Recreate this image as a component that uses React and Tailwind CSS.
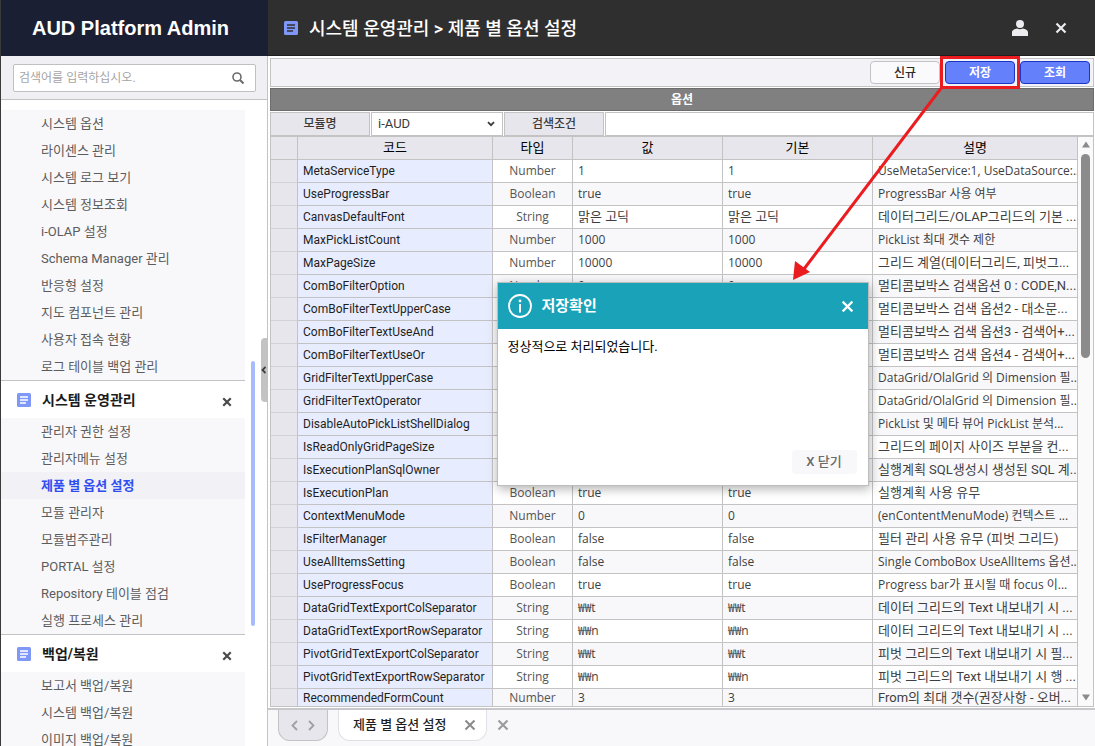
import { useState } from 'react';
import clsx from 'clsx';

const menuGroups = [
  {
    title: null,
    items: [
      '시스템 옵션',
      '라이센스 관리',
      '시스템 로그 보기',
      '시스템 정보조회',
      'i-OLAP 설정',
      'Schema Manager 관리',
      '반응형 설정',
      '지도 컴포넌트 관리',
      '사용자 접속 현황',
      '로그 테이블 백업 관리',
    ],
  },
  {
    title: '시스템 운영관리',
    items: [
      '관리자 권한 설정',
      '관리자메뉴 설정',
      '제품 별 옵션 설정',
      '모듈 관리자',
      '모듈범주관리',
      'PORTAL 설정',
      'Repository 테이블 점검',
      '실행 프로세스 관리',
    ],
  },
  {
    title: '백업/복원',
    items: ['보고서 백업/복원', '시스템 백업/복원', '이미지 백업/복원'],
  },
];

const options = [
  ['MetaServiceType', 'Number', '1', '1', 'UseMetaService:1, UseDataSource:...'],
  ['UseProgressBar', 'Boolean', 'true', 'true', 'ProgressBar 사용 여부'],
  ['CanvasDefaultFont', 'String', '맑은 고딕', '맑은 고딕', '데이터그리드/OLAP그리드의 기본 ...'],
  ['MaxPickListCount', 'Number', '1000', '1000', 'PickList 최대 갯수 제한'],
  ['MaxPageSize', 'Number', '10000', '10000', '그리드 계열(데이터그리드, 피벗그...'],
  ['ComBoFilterOption', 'Number', '0', '0', '멀티콤보박스 검색옵션 0 : CODE,N...'],
  ['ComBoFilterTextUpperCase', 'Boolean', 'false', 'false', '멀티콤보박스 검색 옵션2 - 대소문...'],
  ['ComBoFilterTextUseAnd', 'Boolean', 'false', 'false', '멀티콤보박스 검색 옵션3 - 검색어+...'],
  ['ComBoFilterTextUseOr', 'Boolean', 'false', 'false', '멀티콤보박스 검색 옵션4 - 검색어+...'],
  ['GridFilterTextUpperCase', 'Boolean', 'false', 'false', 'DataGrid/OlalGrid 의 Dimension 필...'],
  ['GridFilterTextOperator', 'Number', '0', '0', 'DataGrid/OlalGrid 의 Dimension 필...'],
  ['DisableAutoPickListShellDialog', 'Boolean', 'false', 'false', 'PickList 및 메타 뷰어 PickList 분석...'],
  ['IsReadOnlyGridPageSize', 'Boolean', 'false', 'false', '그리드의 페이지 사이즈 부분을 컨...'],
  ['IsExecutionPlanSqlOwner', 'Boolean', 'false', 'false', '실행계획 SQL생성시 생성된 SQL 계...'],
  ['IsExecutionPlan', 'Boolean', 'true', 'true', '실행계획 사용 유무'],
  ['ContextMenuMode', 'Number', '0', '0', '(enContentMenuMode) 컨텍스트 ...'],
  ['IsFilterManager', 'Boolean', 'false', 'false', '필터 관리 사용 유무 (피벗 그리드)'],
  ['UseAllItemsSetting', 'Boolean', 'false', 'false', 'Single ComboBox UseAllItems 옵션...'],
  ['UseProgressFocus', 'Boolean', 'true', 'true', 'Progress bar가 표시될 때 focus 이...'],
  ['DataGridTextExportColSeparator', 'String', '₩₩t', '₩₩t', '데이터 그리드의 Text 내보내기 시 ...'],
  ['DataGridTextExportRowSeparator', 'String', '₩₩n', '₩₩n', '데이터 그리드의 Text 내보내기 시 ...'],
  ['PivotGridTextExportColSeparator', 'String', '₩₩t', '₩₩t', '피벗 그리드의 Text 내보내기 시 필...'],
  ['PivotGridTextExportRowSeparator', 'String', '₩₩n', '₩₩n', '피벗 그리드의 Text 내보내기 시 행 ...'],
  ['RecommendedFormCount', 'Number', '3', '3', 'From의 최대 갯수(권장사항 - 오버...'],
];

function cellFont(text) {
  const hangul = (text.match(/[가-힣]/g) || []).length;
  const latin = (text.match(/\w/g) || []).length;
  return hangul > latin
    ? "font-['Roboto','Noto_Sans_CJK_KR',sans-serif] text-[13px]"
    : "font-['Open_Sans','Noto_Sans_CJK_KR',sans-serif] text-xs";
}

function DocIcon({ line }) {
  return (
    <svg className="w-[14px] h-[14px] shrink-0" viewBox="0 0 14 14">
      <rect width="14" height="14" rx="1.5" fill="#7f98f8" />
      <path d="M3 4h8M3 7h8M3 10h6" stroke={line} strokeWidth="1.6" />
    </svg>
  );
}

function CloseIcon({ className, width = 2 }) {
  return (
    <svg className={className} viewBox="0 0 12 12" fill="none" stroke="currentColor" strokeWidth={width}>
      <path d="M1.5 1.5l9 9M10.5 1.5l-9 9" />
    </svg>
  );
}

function Sidebar({ active, onSelect }) {
  return (
    <aside className="relative w-[268px] shrink-0 flex flex-col bg-white border-l border-[#3a3a3a] border-r border-r-[#c3c3c3]">
      <div className="h-14 shrink-0 -mr-px flex items-center justify-center bg-[#1b1f33] text-white">
        <h1 className="font-['Liberation_Sans'] font-bold text-xl pr-2">AUD Platform Admin</h1>
      </div>
      <div className="h-11 shrink-0 pl-3 pr-[11px] flex items-center bg-[#efeff4] border-b border-[#c3c3c3]">
        <label className="flex-1 h-7 flex items-center pl-[5px] pr-[11px] bg-white border border-[#c0c0c0] rounded-xs">
          <input
            type="text"
            aria-label="메뉴 검색"
            placeholder="검색어를 입력하십시오."
            className="flex-1 min-w-0 outline-none text-xs placeholder:text-[#a5a5a5]"
          />
          <svg className="w-3 h-3" viewBox="0 0 12 12" fill="none" stroke="#6b6b6b">
            <circle cx="5" cy="5" r="4" strokeWidth="1.6" />
            <path d="M8 8l3.5 3.5" strokeWidth="2" />
          </svg>
        </label>
      </div>

      <nav className="flex-1 min-h-0 overflow-hidden pt-[10px] pr-[22px]">
        {menuGroups.map((group, i) => (
          <section key={i} className={clsx(group.title && 'border-t border-[#c3c3c3]')}>
            {group.title && (
              <div className="h-[37px] flex items-center pl-4 pr-[13px]">
                <DocIcon line="#fff" />
                <h2 className="flex-1 pl-[11px] text-sm font-bold text-[#1b1b1b]">{group.title}</h2>
                <button type="button" aria-label="접기" className="pt-1 text-[#4a4a4a]">
                  <CloseIcon className="w-[10px] h-[10px]" width={2.6} />
                </button>
              </div>
            )}
            <ul className="bg-[#f8f8fb]">
              {group.items.map((item) => (
                <li key={item}>
                  <a
                    href="#"
                    onClick={() => onSelect(item)}
                    className={clsx(
                      'block h-[27px] pl-10 leading-[27px]',
                      item === active ? 'bg-[#f1f1f6] text-[#2f4df0] font-bold' : 'text-[#5c5c5c]'
                    )}
                  >
                    {item}
                  </a>
                </li>
              ))}
            </ul>
          </section>
        ))}
      </nav>

      {/* Scroll thumb */}
      <div className="absolute right-3 top-[361px] w-1 h-[265px] rounded-full bg-[#a6bcfd]" />
      {/* Collapse handle */}
      <button
        type="button"
        aria-label="메뉴 접기"
        className="absolute right-0 top-[338px] w-[6px] h-16 flex items-center rounded-l bg-[#c3c3c3] text-[#3f3f3f]"
      >
        <svg className="w-[5px] h-2" viewBox="0 0 5 8" fill="none" stroke="currentColor" strokeWidth="1.8">
          <path d="M4.5 1L1.5 4l3 3" />
        </svg>
      </button>
    </aside>
  );
}

function Toolbar() {
  return (
    <div className="h-[29px] shrink-0 flex items-center justify-end gap-[5px] pr-[3px] bg-[#f2f2f7] border border-[#c3c3c3] text-xs">
      <button type="button" className="w-[70px] h-[23px] rounded border border-[#c3c3c3] bg-[#fafafc] text-[#2b2b2b] font-medium">
        신규
      </button>
      <div className="relative flex">
        <button type="button" className="w-[70px] h-[23px] rounded border border-[#1b35c8] bg-[#6580fb] text-white font-bold">
          저장
        </button>
        {/* Highlight and pointer to the dialog */}
        <div className="absolute -left-[5px] -right-[5px] -top-[5px] -bottom-[5px] z-30 border-3 border-[#ea1c20] pointer-events-none" />
        <svg
          className="absolute z-30 -left-[154px] top-[26px] w-[154px] h-[194px] pointer-events-none"
          viewBox="0 0 154 194"
        >
          <path d="M151 0L13 182" stroke="#ea1c20" strokeWidth="3" />
          <path d="M2 193L4 174L19 185Z" fill="#ea1c20" />
        </svg>
      </div>
      <button type="button" className="w-[70px] h-[23px] rounded border border-[#1b35c8] bg-[#6580fb] text-white font-bold">
        조회
      </button>
    </div>
  );
}

function FilterBar() {
  return (
    <div className="h-6 shrink-0 flex gap-px text-xs text-[#3a3a3a]">
      <label
        htmlFor="module"
        className="w-[100px] flex items-center justify-center bg-[#e6e6ec] border border-[#c3c3c3] font-medium"
      >
        모듈명
      </label>
      <div className="relative w-[132px] flex">
        <select id="module" className="w-full pl-[6px] appearance-none bg-white border border-[#c3c3c3] font-['Roboto'] text-[13px]">
          <option>i-AUD</option>
        </select>
        <svg
          className="absolute right-2 top-[9px] w-2 h-[6px] pointer-events-none"
          viewBox="0 0 8 6"
          fill="none"
          stroke="#3a3a3a"
          strokeWidth="1.8"
        >
          <path d="M1 1.2l3 3 3-3" />
        </svg>
      </div>
      <label
        htmlFor="keyword"
        className="w-[100px] flex items-center justify-center bg-[#e6e6ec] border border-[#c3c3c3] font-medium"
      >
        검색조건
      </label>
      <input id="keyword" type="text" className="flex-1 min-w-0 px-2 bg-white border border-[#c3c3c3] outline-none" />
    </div>
  );
}

function OptionGrid() {
  const th = 'p-0 border-r border-b border-[#c3c3c3] bg-[#e6e6ec] font-normal text-black';
  const td = 'p-0 pl-[5px] border-r border-b border-[#c3c3c3] whitespace-nowrap overflow-hidden';

  return (
    <div className="flex-1 min-h-0 flex border border-[#c3c3c3] bg-white">
      <div className="flex-1 min-w-0 overflow-hidden">
        <table className="w-full table-fixed border-separate border-spacing-0">
          <colgroup>
            <col className="w-[27px]" />
            <col className="w-[195px]" />
            <col className="w-[80px]" />
            <col className="w-[150px]" />
            <col className="w-[150px]" />
            <col />
          </colgroup>
          <thead className="text-[13px] leading-[22px]">
            <tr>
              <th className={th} aria-label="선택" />
              <th className={th}>코드</th>
              <th className={th}>타입</th>
              <th className={th}>값</th>
              <th className={th}>기본</th>
              <th className={th}>설명</th>
            </tr>
          </thead>
          <tbody>
            {options.map(([code, type, value, base, desc], i) => (
              <tr
                key={code}
                className={clsx('text-[#3f3f3f] leading-[22px] last:leading-[18px]', i % 2 ? 'bg-[#f8f8fb]' : 'bg-white')}
              >
                <td className="p-0 border-r border-b border-[#c3c3c3] border-b-[#d2d2d6] bg-[#e6e6ec]" />
                <td className={clsx(td, "font-['Roboto',sans-serif] text-xs leading-[inherit] bg-[#e7edfe] text-[#1f1f1f]")}>{code}</td>
                <td className={clsx(td, cellFont(type), 'leading-[inherit] pr-[5px] text-center text-[#555]')}>{type}</td>
                <td className={clsx(td, cellFont(value), 'leading-[inherit]')}>{value}</td>
                <td className={clsx(td, cellFont(base), 'leading-[inherit]')}>{base}</td>
                <td className={clsx(td, cellFont(desc), 'leading-[inherit]')}>{desc}</td>
              </tr>
            ))}
          </tbody>
        </table>
      </div>
      {/* Scrollbar */}
      <div className="w-[15px] shrink-0 flex flex-col items-center justify-between bg-[#fafafa] pt-1 pb-[5px] text-[#8b8b8b]">
        <div className="flex flex-col items-center gap-[6px]">
          <svg className="w-2 h-[7px]" viewBox="0 0 8 7" fill="currentColor">
            <path d="M4 0.5L8 6.5H0Z" />
          </svg>
          <div className="w-[9px] h-[204px] rounded-full bg-[#8b8b8b]" />
        </div>
        <svg className="w-2 h-[7px]" viewBox="0 0 8 7" fill="currentColor">
          <path d="M4 6.5L8 0.5H0Z" />
        </svg>
      </div>
    </div>
  );
}

function SaveDialog({ onClose }) {
  return (
    <div className="absolute inset-0 pt-1 pl-[2px] z-20 flex items-center justify-center pointer-events-none">
      <div
        role="dialog"
        aria-labelledby="dialog-title"
        className="w-[372px] h-[204px] flex flex-col bg-white border border-[#bdbdbd] shadow-[1px_3px_10px_rgba(0,0,0,0.3)] pointer-events-auto"
      >
        <div className="h-[46px] shrink-0 flex items-center gap-[10px] pl-[10px] pr-[14px] bg-[#19a2b8] text-white">
          <svg className="w-6 h-6" viewBox="0 0 24 24" fill="none" stroke="currentColor">
            <circle cx="12" cy="12" r="11" strokeWidth="1.8" />
            <path d="M12 10v8.5" strokeWidth="2" />
            <circle cx="12" cy="7" r="1.4" fill="currentColor" stroke="none" />
          </svg>
          <h3 id="dialog-title" className="flex-1 text-[15px] font-bold">저장확인</h3>
          <button type="button" aria-label="닫기" onClick={onClose}>
            <CloseIcon className="w-[13px] h-[13px]" width={2} />
          </button>
        </div>
        <p className="flex-1 pl-[10px] pt-2 text-[13px] leading-5 text-black">정상적으로 처리되었습니다.</p>
        <div className="flex justify-end pb-[11px] pr-[11px]">
          <button
            type="button"
            onClick={onClose}
            className="w-[65px] h-6 rounded bg-[#f8f8fb] text-[#6a6a6a] font-medium"
          >
            X 닫기
          </button>
        </div>
      </div>
    </div>
  );
}

function TabBar() {
  return (
    <div className="h-9 shrink-0 flex items-start pl-[10px] bg-[#f8f8fb]">
      <div className="w-[50px] h-[31px] flex items-center justify-center gap-[10px] rounded-b-xl border border-t-0 border-[#c3c3c3] bg-[#e6e6ec] text-[#a0a0a4]">
        <button type="button" aria-label="이전 탭">
          <svg className="w-[7px] h-[11px]" viewBox="0 0 7 11" fill="none" stroke="currentColor" strokeWidth="1.8">
            <path d="M6 1L1.5 5.5 6 10" />
          </svg>
        </button>
        <button type="button" aria-label="다음 탭">
          <svg className="w-[7px] h-[11px]" viewBox="0 0 7 11" fill="none" stroke="currentColor" strokeWidth="1.8">
            <path d="M1 1l4.5 4.5L1 10" />
          </svg>
        </button>
      </div>
      <div className="ml-[10px] h-[31px] w-[149px] flex items-center justify-between pl-[14px] pr-[10px] rounded-b-xl border border-t-0 border-[#e0e0e6] bg-white">
        <span className="text-[13px] font-medium text-[#1f1f1f]">제품 별 옵션 설정</span>
        <button type="button" aria-label="탭 닫기" className="text-[#8a8a8a]">
          <CloseIcon className="w-3 h-3" width={2} />
        </button>
      </div>
      <button type="button" aria-label="모든 탭 닫기" className="ml-[10px] h-[30px] flex items-center text-[#9c9c9c]">
        <CloseIcon className="w-3 h-3" width={2.2} />
      </button>
    </div>
  );
}

export default function App() {
  const [active, setActive] = useState('제품 별 옵션 설정');
  const [showDialog, setShowDialog] = useState(true);

  return (
    <div className="h-screen flex overflow-hidden bg-white font-['Roboto','Noto_Sans_CJK_KR',sans-serif] text-[13px]">
      <Sidebar active={active} onSelect={setActive} />

      <main className="flex-1 min-w-0 flex flex-col">
        {/* Header */}
        <header className="h-14 shrink-0 flex items-center pl-4 pr-7 bg-[#2f2f2f] border-b border-[#1f1f1f] text-[#ececf0]">
          <DocIcon line="#2f2f2f" />
          <h2 className="flex-1 pl-[11px] pt-[2px] text-lg font-medium text-white">시스템 운영관리 &gt; 제품 별 옵션 설정</h2>
          <button type="button" aria-label="사용자">
            <svg className="w-4 h-4" viewBox="0 0 16 16" fill="currentColor">
              <circle cx="8" cy="4" r="4" />
              <path d="M0 16v-3.500C0 10 3 9 5 8.600c2 1 4 1 6 0c2 .4 5 1.400 5 3.900V16Z" />
            </svg>
          </button>
          <button type="button" aria-label="닫기" className="ml-[27px]">
            <CloseIcon className="w-3 h-3" width={2.2} />
          </button>
        </header>

        <div className="relative flex-1 min-h-0 flex flex-col pt-[2px] pl-[2px] pr-px pb-px border-b-2 border-[#c8c8cc]">
          <Toolbar />
          <div className="mt-px h-[23px] shrink-0 flex items-center justify-center bg-[#808080] border border-[#6c6c6c] text-xs font-bold text-white">
            옵션
          </div>
          <div className="mt-px flex-1 min-h-0 flex flex-col">
            <FilterBar />
            <OptionGrid />
          </div>
          {showDialog && <SaveDialog onClose={() => setShowDialog(false)} />}
        </div>

        <TabBar />
      </main>
    </div>
  );
}
